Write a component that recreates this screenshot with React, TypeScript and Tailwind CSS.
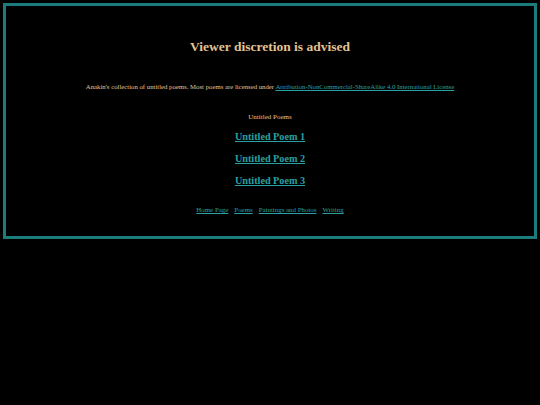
import React from "react";

const links = ["Untitled Poem 1", "Untitled Poem 2", "Untitled Poem 3"];
const nav = ["Home Page", "Poems", "Paintings and Photos", "Writing"];

export default function App() {
  return (
    <div className="min-h-screen bg-black p-[3px] font-['Liberation_Serif',serif]">
      <div className="flex flex-col items-center border-[3px] border-[#1c7b7b] pt-[33px] pb-[22px] text-center">
        <h1 className="text-[13.5px] leading-[16px] font-bold text-[#e3c393]">Viewer discretion is advised</h1>
        <p className="mt-[27px] text-[6.75px] leading-[9px] text-[#e3c393]">
          Anakin's collection of untitled poems. Most poems are licensed under{" "}
          <a href="#" className="text-[#2aa0a0] underline">
            Attribution-NonCommercial-ShareAlike 4.0 International License
          </a>
        </p>
        <p className="mt-[22px] text-[7px] leading-[9px] text-[#e3c393]">Untitled Poems</p>
        <div className="mt-[8px] flex flex-col items-center gap-[8px]">
          {links.map((l) => (
            <a key={l} href="#" className="text-[10.2px] leading-[14px] font-bold text-[#2aa0a0] underline">
              {l}
            </a>
          ))}
        </div>
        <div className="mt-[17px] flex gap-[6px] text-[6.9px] leading-[9px]">
          {nav.map((n) => (
            <a key={n} href="#" className="text-[#2aa0a0] underline">
              {n}
            </a>
          ))}
        </div>
      </div>
    </div>
  );
}
